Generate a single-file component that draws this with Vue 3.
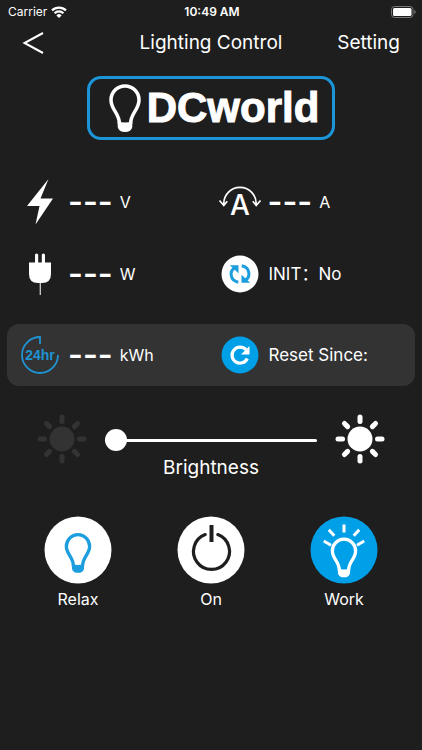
<script setup>
import { ref } from 'vue'

const brightness = ref(0)

const rays = [0, 45, 90, 135, 180, 225, 270, 315]

const readings = [
  { id: 'voltage', unit: 'V' },
  { id: 'current', unit: 'A' },
  { id: 'power', unit: 'W' },
]

const modes = [
  { id: 'relax', name: 'Relax' },
  { id: 'on', name: 'On' },
  { id: 'work', name: 'Work' },
]
</script>

<template>
  <div class="page">
    <div class="status-bar">
      <div class="carrier">
        <span>Carrier</span>
        <svg width="16" height="12" viewBox="0 0 16 12" fill="none" stroke="#fff" stroke-width="2.200">
          <path d="M1 4.400a10 10 0 0 1 14 0" />
          <path d="M3.600 7.300a6.200 6.200 0 0 1 8.800 0" />
          <path d="M8 12L5.400 9.400a3.700 3.700 0 0 1 5.200 0z" fill="#fff" stroke="none" />
        </svg>
      </div>
      <span class="time">10:49 AM</span>
      <svg class="battery" width="25" height="12" viewBox="0 0 25 12">
        <rect x=".5" y=".5" width="21.500" height="11" rx="3" fill="none" stroke="#777" />
        <rect x="2" y="2" width="18.500" height="8" rx="1.500" fill="#fff" />
        <path d="M23.300 4v4q1.400-.6 1.400-2t-1.400-2z" fill="#777" />
      </svg>
    </div>

    <header class="nav">
      <button class="back" aria-label="Back">
        <svg width="22" height="24" viewBox="0 0 22 24" fill="none" stroke="#fff" stroke-width="2">
          <path d="M21 2L2.500 12 21 22" />
        </svg>
      </button>
      <h1>Lighting Control</h1>
      <a href="#" class="setting">Setting</a>
    </header>

    <div class="logo">
      <svg width="32" height="48" viewBox="0 0 32 48">
        <path d="M10.500 40C10.500 29 2 26 2 16a14 14 0 0 1 28 0c0 10-8.500 13-8.500 24" fill="none" stroke="#fff" stroke-width="3.500" />
        <path d="M8.700 37q7.300 3 14.600 0v6q-1 5-7.300 5t-7.300-5z" fill="#fff" />
      </svg>
      <span>DCworld</span>
    </div>

    <div class="row">
      <div class="item">
        <svg width="40" height="48" viewBox="0 0 40 48">
          <path d="M28.500 1L7 28h12.500L15.500 46.500 33 20.500H20.500z" fill="#fff" />
        </svg>
        <b class="value">---</b>
        <span class="unit">{{ readings[0].unit }}</span>
      </div>
      <div class="item">
        <svg class="meter" width="40" height="40" viewBox="0 0 40 40">
          <path d="M3.800 23.500V21.500a16.200 16.200 0 0 1 32.400 0v2M-.5 18.500l4.300 5 3.400-4.300M40.500 18.500l-4.300 5-3.400-4.300" fill="none" stroke="#fff" stroke-width="1.700" />
          <text x="20" y="33" text-anchor="middle" fill="#fff" class="amp">A</text>
        </svg>
        <b class="value">---</b>
        <span class="unit">{{ readings[1].unit }}</span>
      </div>
    </div>

    <div class="row">
      <div class="item">
        <svg width="40" height="44" viewBox="0 0 40 44">
          <path d="M15 10.500V3a1.600 1.600 0 0 1 3.200 0V10.500h3.600V3a1.600 1.600 0 0 1 3.200 0V10.500h6v11.500q0 9-9 9h-4q-9 0-9-9V10.500z" fill="#fff" />
          <path d="M20.300 31v12" stroke="#ccc" stroke-width="1.300" />
        </svg>
        <b class="value">---</b>
        <span class="unit">{{ readings[2].unit }}</span>
      </div>
      <div class="item">
        <svg width="40" height="40" viewBox="0 0 40 40">
          <circle cx="20" cy="20" r="18.500" fill="#fff" />
          <g v-for="turn in [0, 180]" :key="turn" :transform="`rotate(${turn} 20 20)`">
            <path d="M18.300 28.200C9.500 26.500 9.500 17 14.500 14" fill="none" stroke="#1b9dde" stroke-width="3" />
            <path d="M9.800 11.300h8.700v8z" fill="#1b9dde" />
          </g>
        </svg>
        <span class="text">INIT：No</span>
      </div>
    </div>

    <div class="row card">
      <div class="item">
        <svg width="40" height="40" viewBox="0 0 40 40">
          <path d="M20 9V2A18 18 0 1 0 38 20" fill="none" stroke="#1f93d2" stroke-width="1.800" />
          <text x="20" y="25" text-anchor="middle" fill="#1f93d2" class="hours">24hr</text>
        </svg>
        <b class="value">---</b>
        <span class="unit">kWh</span>
      </div>
      <div class="item">
        <button class="reset" aria-label="Reset">
          <svg width="40" height="40" viewBox="0 0 40 40">
            <circle cx="20" cy="20" r="18.500" fill="#00a0e9" />
            <path d="M27.300 23.500A8 8 0 1 1 26 14.800" fill="none" stroke="#fff" stroke-width="3.200" />
            <path d="M29.500 11v8.500H21z" fill="#fff" />
          </svg>
        </button>
        <span class="text">Reset Since:</span>
      </div>
    </div>

    <div class="dimmer">
      <svg class="sun low" width="50" height="50" viewBox="-25 -25 50 50">
        <circle r="12.500" />
        <path v-for="deg in rays" :key="deg" d="M0-17.500v-4.500" :transform="`rotate(${deg})`" />
      </svg>
      <div class="control">
        <input id="brightness" v-model="brightness" type="range" min="0" max="100">
        <label for="brightness">Brightness</label>
      </div>
      <svg class="sun" width="50" height="50" viewBox="-25 -25 50 50">
        <circle r="12.500" />
        <path v-for="deg in rays" :key="deg" d="M0-17.500v-4.500" :transform="`rotate(${deg})`" />
      </svg>
    </div>

    <div class="modes">
      <button v-for="mode of modes" :key="mode.id" :class="['mode', mode.id]">
        <svg width="68" height="68" viewBox="0 0 68 68">
          <circle class="disc" cx="34" cy="34" r="33.500" />
          <g v-if="mode.id === 'on'" fill="none" stroke="#1e1e1e">
            <path d="M28.200 18.600a18 18 0 1 0 12.600 0" stroke-width="3.200" stroke-linecap="round" />
            <path d="M34.500 9v17" stroke-width="4" />
          </g>
          <g v-else class="bulb">
            <g :transform="mode.id === 'relax' ? 'translate(20.700 17) scale(.83)' : 'translate(20.700 21.500) scale(.83)'">
              <path d="M10.500 40C10.500 29 2 26 2 16a14 14 0 0 1 28 0c0 10-8.500 13-8.500 24" fill="none" stroke-width="4" />
              <path d="M8.700 37q7.300 3 14.600 0v6q-1 5-7.300 5t-7.300-5z" stroke="none" />
            </g>
            <path v-if="mode.id === 'work'" d="M34 8.500v8M18.800 13.700l5.500 6M49.200 13.700l-5.500 6M13.800 25l7.200 4.200M54.200 25L47 29.200" stroke-width="3" />
          </g>
        </svg>
        <span>{{ mode.name }}</span>
      </button>
    </div>
  </div>
</template>

<style>
body {
  margin: 0;
  background-color: #1e1e1e;
}
</style>

<style scoped>
.page {
  min-height: 100vh;
  padding-bottom: 24px;
  box-sizing: border-box;
  background-color: #1e1e1e;
  color: #fff;
  font-family: Inter, Roboto, "Noto Sans CJK SC", sans-serif;
  font-size: 16px;
  line-height: 24px;
}

button {
  padding: 0;
  border: none;
  background: none;
  color: inherit;
  font: inherit;
  cursor: pointer;
}

svg {
  display: block;
  flex-shrink: 0;
}

.status-bar {
  display: grid;
  grid-template-columns: 1fr auto 1fr;
  align-items: center;
  height: 22px;
  padding: 0 6px 0 8px;
  font-size: 12px;
}

.carrier {
  display: flex;
  align-items: center;
  gap: 4px;
}

.time {
  font-weight: 600;
}

.battery {
  justify-self: end;
}

.nav {
  display: grid;
  grid-template-columns: 1fr auto 1fr;
  align-items: center;
  height: 42px;
  padding: 0 22px;
}

.back {
  justify-self: start;
}

h1 {
  margin: 0;
  font-size: 19px;
  font-weight: 400;
}

.setting {
  justify-self: end;
  color: #fff;
  font-size: 19px;
  text-decoration: none;
}

.logo {
  display: flex;
  align-items: center;
  justify-content: center;
  gap: 6px;
  width: 248px;
  height: 64px;
  margin: 12px auto 26px;
  padding-left: 6px;
  box-sizing: border-box;
  border: 3px solid #1b95d8;
  border-radius: 14px;
  font-family: "Liberation Sans", Arial, sans-serif;
  font-size: 42px;
  font-weight: bold;
  -webkit-text-stroke: 1px #fff;
}

.row {
  display: grid;
  grid-template-columns: calc(50% + 2px) 1fr;
  height: 72px;
  margin: 0 7px;
  padding-left: 13px;
}

.card {
  height: 62px;
  margin-top: 14px;
  border-radius: 12px;
  background-color: #333;
}

.item {
  display: flex;
  align-items: center;
}

.meter {
  overflow: visible;
}

.value {
  margin: 0 7px 0 8px;
  font-size: 32px;
  font-weight: 600;
}

.text {
  margin-left: 9px;
  font-size: 17px;
}

.amp {
  font-size: 28px;
  font-weight: 500;
}

.hours {
  font-family: "Liberation Sans", Arial, sans-serif;
  font-size: 14px;
  font-weight: bold;
}

.dimmer {
  display: flex;
  gap: 18px;
  margin-top: 28px;
  padding: 0 37px;
}

.sun {
  fill: #fff;
  stroke: #fff;
  stroke-width: 5px;
  stroke-linecap: round;

  circle {
    stroke: none;
  }

  &.low {
    fill: #333;
    stroke: #333;
  }
}

.control {
  display: flex;
  flex: 1;
  flex-direction: column;
  align-items: center;
  gap: 4px;
  padding-top: 14px;
  font-size: 19px;
}

input {
  width: 100%;
  height: 24px;
  margin: 0;
  appearance: none;
  background: none;

  &::-webkit-slider-runnable-track {
    height: 3px;
    border-radius: 2px;
    background-color: #fff;
  }

  &::-webkit-slider-thumb {
    width: 22px;
    height: 22px;
    margin-top: -10px;
    appearance: none;
    border-radius: 50%;
    background-color: #fff;
  }
}

.modes {
  display: flex;
  justify-content: space-between;
  margin-top: 36px;
  padding: 0 44px;
}

.mode {
  display: flex;
  flex-direction: column;
  align-items: center;
  gap: 3px;
  width: 68px;
}

.disc {
  fill: #fff;
}

.bulb {
  fill: #1b9dde;
  stroke: #1b9dde;
}

.work {
  .disc {
    fill: #00a0e9;
  }

  .bulb {
    fill: #fff;
    stroke: #fff;
  }
}
</style>
